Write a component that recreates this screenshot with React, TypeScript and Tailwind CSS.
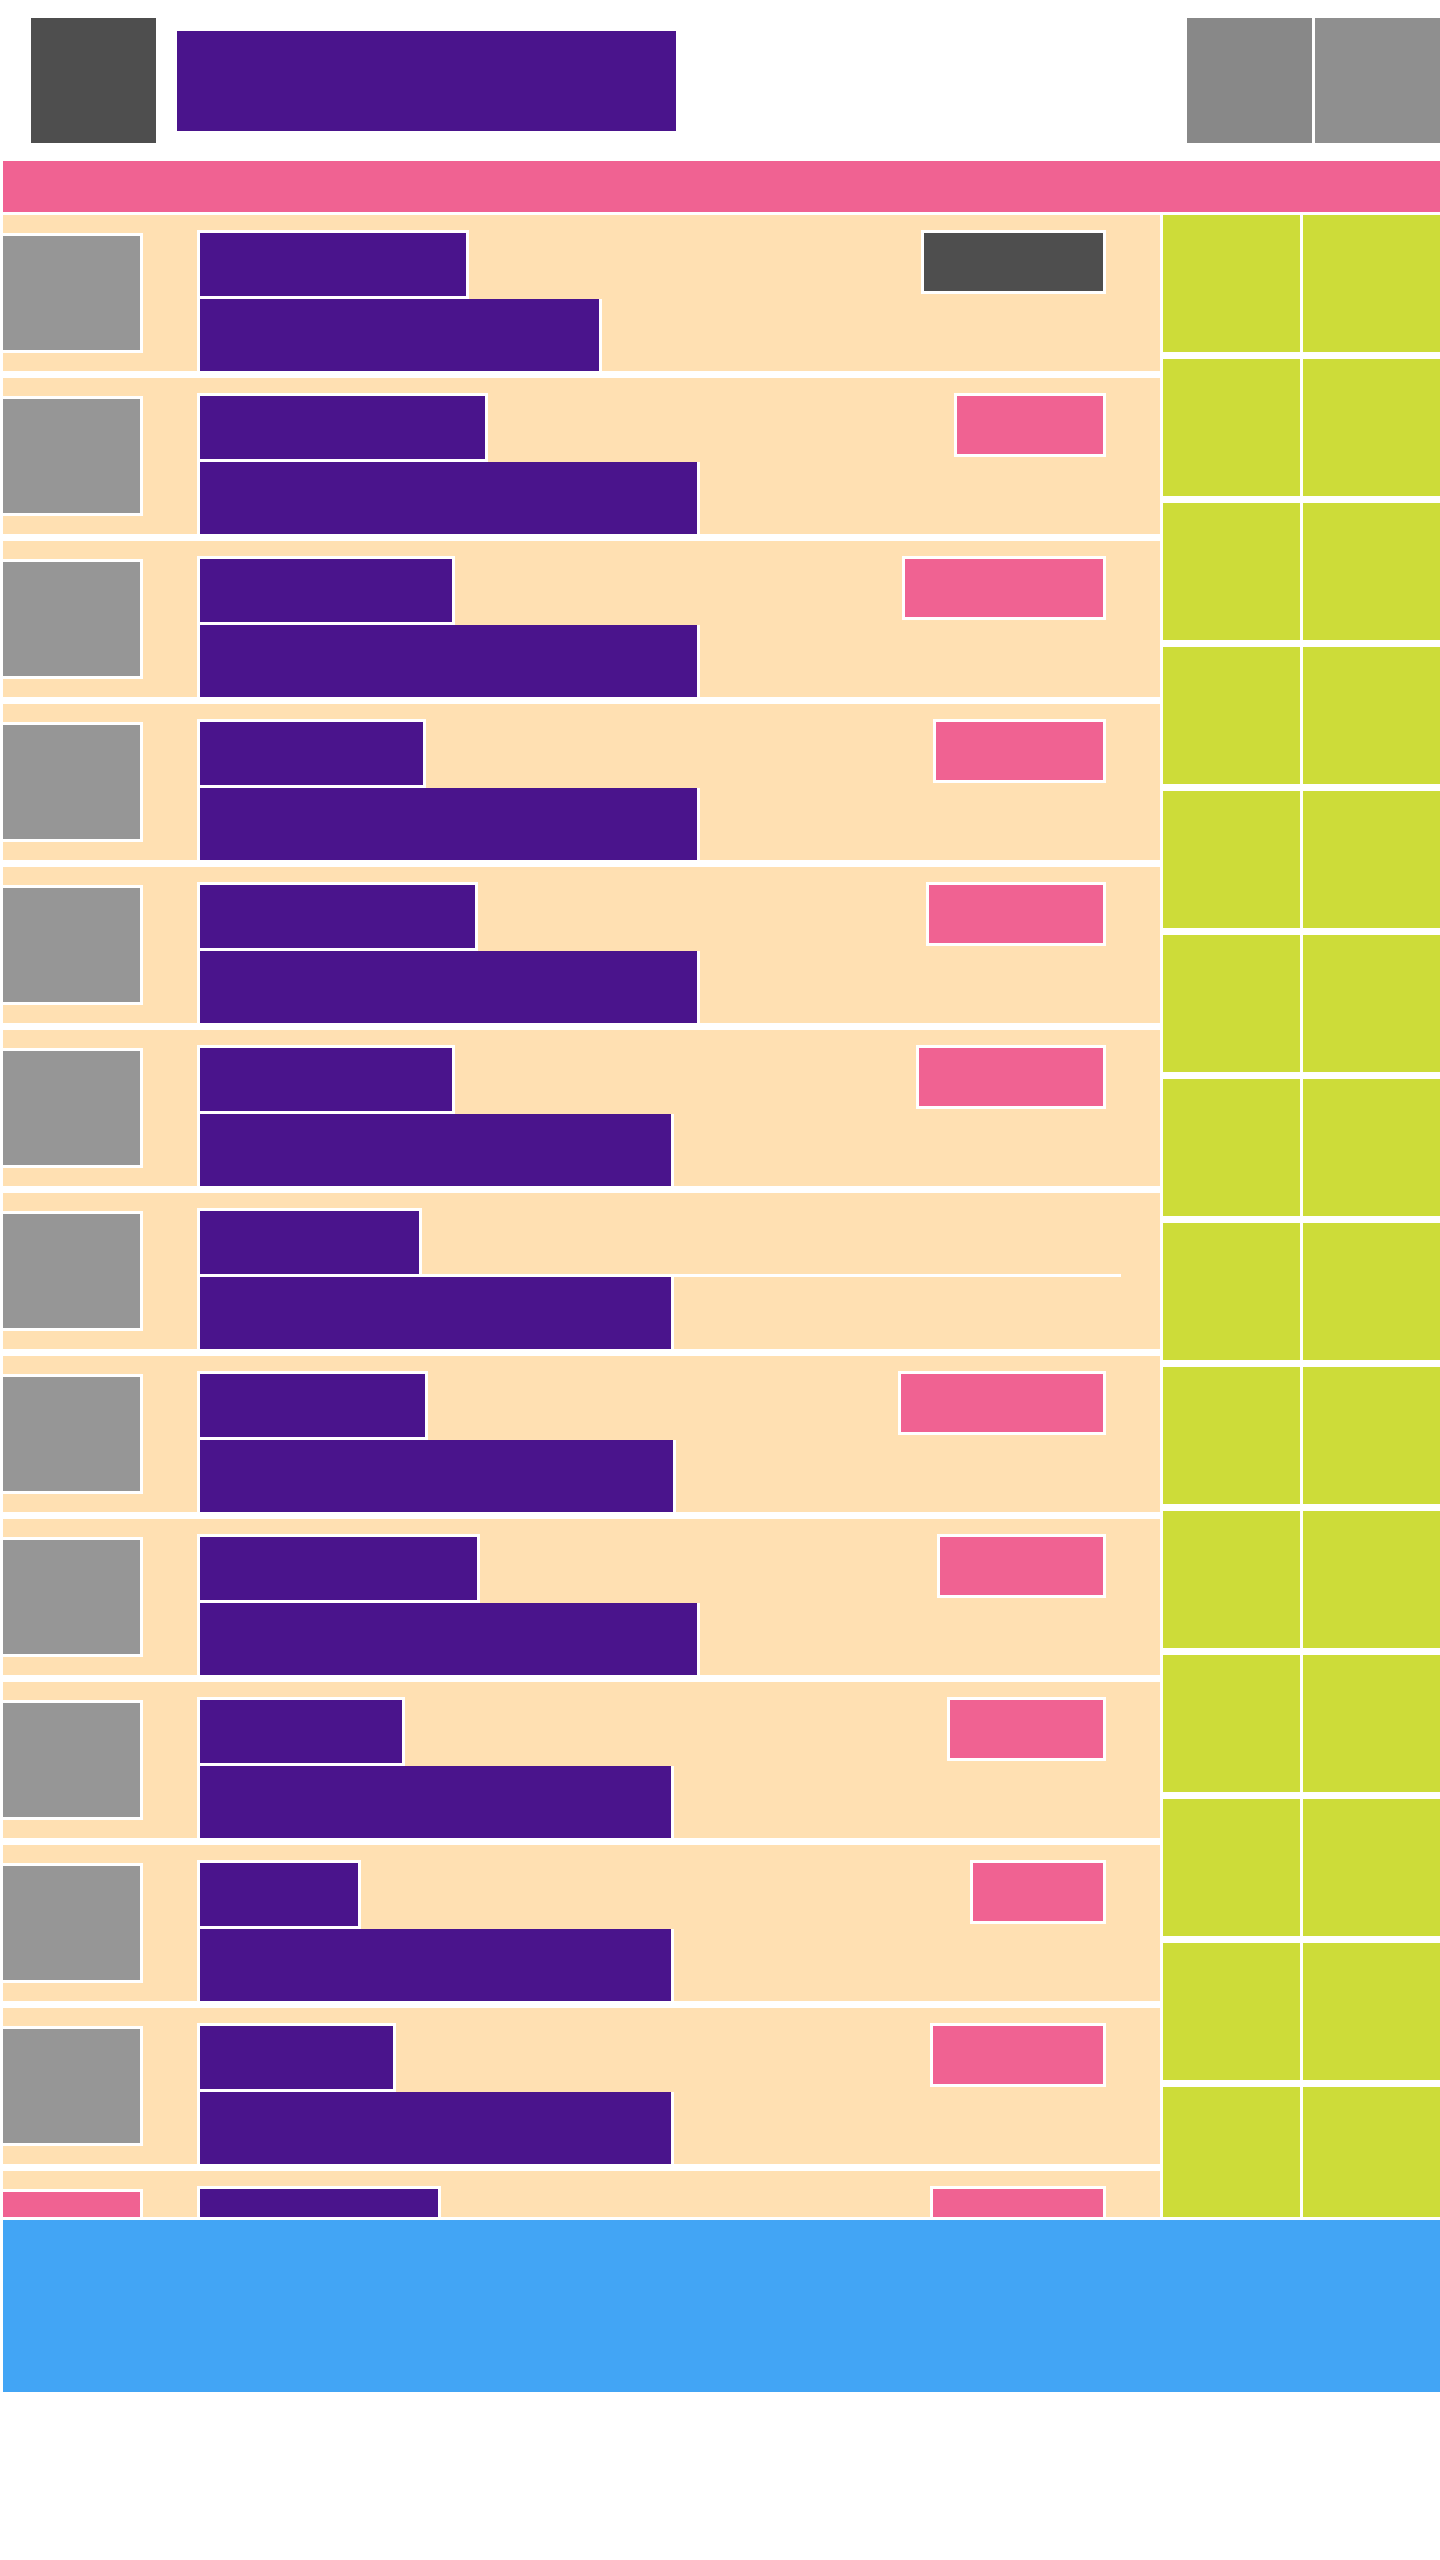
import React from 'react'

type Row = {
  title: string
  sub: string
  badge?: string
  badgeTone?: 'dark' | 'pink'
  thumb?: string
  rule?: boolean
}

// widths are outer widths (incl. white frame)
const rows: Row[] = [
  { title: 'w-[272px]', sub: 'w-[405px]', badge: 'w-[185px]', badgeTone: 'dark' },
  { title: 'w-[291px]', sub: 'w-[503px]', badge: 'w-[152px]' },
  { title: 'w-[258px]', sub: 'w-[503px]', badge: 'w-[204px]' },
  { title: 'w-[229px]', sub: 'w-[503px]', badge: 'w-[173px]' },
  { title: 'w-[281px]', sub: 'w-[503px]', badge: 'w-[180px]' },
  { title: 'w-[258px]', sub: 'w-[477px]', badge: 'w-[190px]' },
  { title: 'w-[225px]', sub: 'w-[477px]', rule: true },
  { title: 'w-[231px]', sub: 'w-[479px]', badge: 'w-[208px]' },
  { title: 'w-[283px]', sub: 'w-[503px]', badge: 'w-[169px]' },
  { title: 'w-[208px]', sub: 'w-[477px]', badge: 'w-[159px]' },
  { title: 'w-[164px]', sub: 'w-[477px]', badge: 'w-[136px]' },
  { title: 'w-[199px]', sub: 'w-[477px]', badge: 'w-[176px]' },
  { title: 'w-[244px]', sub: 'w-[477px]', badge: 'w-[176px]', thumb: 'bg-[#f06292]' },
]

function ListRow({ row }: { row: Row }) {
  return (
    <div className="flex h-[156px] shrink-0 items-start overflow-hidden bg-[#ffe0b2]">
      {/* thumbnail */}
      <div
        className={`mt-[18px] h-[120px] w-[140px] shrink-0 border-y-[3px] border-r-[3px] border-white ${
          row.thumb ?? 'bg-[#969696]'
        }`}
      />

      {/* text block */}
      <div className="ml-[54px] mr-[54px] mt-[15px] flex min-w-0 flex-1 flex-col">
        <div className="flex items-start justify-between">
          <div className={`h-[69px] shrink-0 border-[3px] border-white bg-[#4a148c] ${row.title}`} />
          {row.rule && <div className="-mr-[15px] mt-[66px] h-[3px] flex-1 bg-white" />}
          {row.badge && (
            <div
              className={`h-[64px] shrink-0 border-[3px] border-white ${row.badge} ${
                row.badgeTone === 'dark' ? 'bg-[#4e4e4e]' : 'bg-[#f06292]'
              }`}
            />
          )}
        </div>
        <div className={`h-[90px] shrink-0 border-x-[3px] border-b-[3px] border-white bg-[#4a148c] ${row.sub}`} />
      </div>
    </div>
  )
}

export default function App() {
  return (
    <div className="min-h-screen overflow-hidden bg-white">
      <div className="ml-[3px] w-[1437px]">
        {/* header */}
        <header className="flex items-center py-[18px] pl-[28px]">
          <div className="h-[125px] w-[125px] bg-[#4e4e4e]" />
          <div className="ml-[21px] h-[100px] w-[499px] bg-[#4a148c]" />
          <div className="ml-auto flex gap-[3px]">
            <div className="h-[125px] w-[125px] bg-[#888888]" />
            <div className="h-[125px] w-[125px] bg-[#8f8f8f]" />
          </div>
        </header>

        {/* nav bar */}
        <div className="h-[51px] bg-[#f06292]" />

        {/* main */}
        <main className="mt-[3px] flex h-[2002px] gap-[3px] overflow-hidden">
          <section className="flex w-[1157px] shrink-0 flex-col gap-[7px]">
            {rows.map((row, i) => (
              <ListRow key={i} row={row} />
            ))}
          </section>
          <aside className="grid w-[277px] shrink-0 auto-rows-[137px] grid-cols-2 gap-x-[3px] gap-y-[7px]">
            {Array.from({ length: 28 }).map((_, i) => (
              <div key={i} className="bg-[#cddc39]" />
            ))}
          </aside>
        </main>

        {/* footer */}
        <footer className="mt-[3px] h-[172px] bg-[#42a5f5]" />
      </div>
    </div>
  )
}
